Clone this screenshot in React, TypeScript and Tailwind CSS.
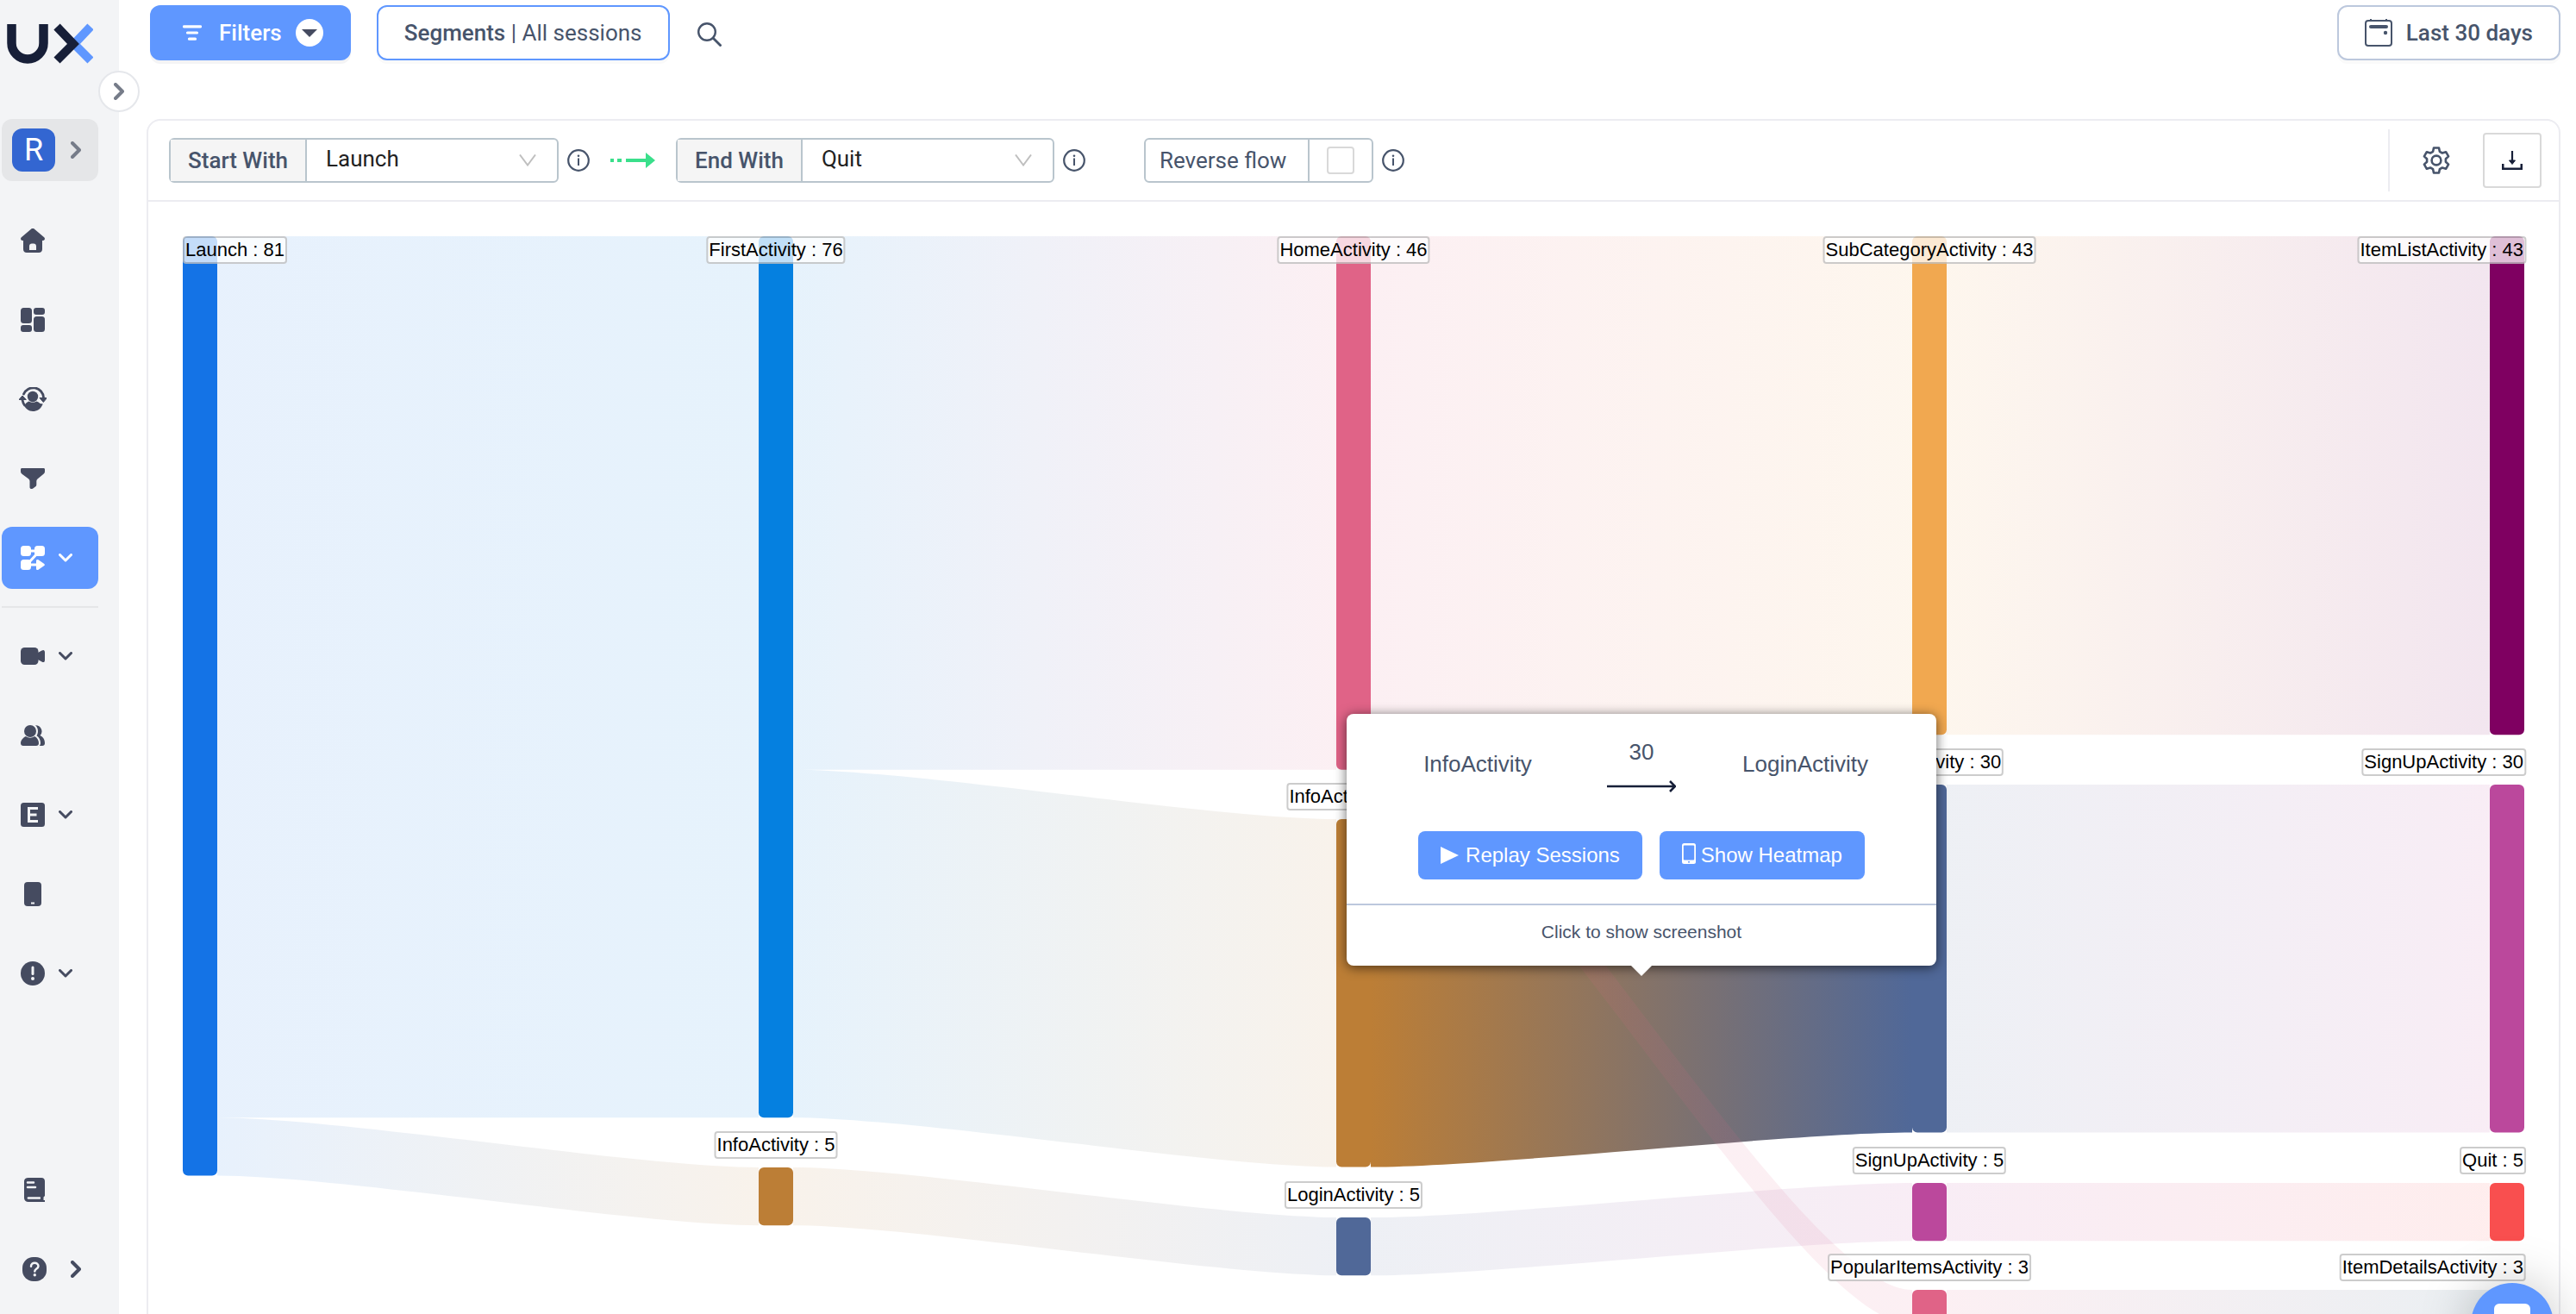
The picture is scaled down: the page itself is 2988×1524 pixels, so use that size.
import React, { useLayoutEffect, useRef, useState } from 'react';

type SankeyNode = {
  id: string;
  name: string;
  value: number;
  column: number;
  y: number;
  color: string;
};

type SankeyLink = {
  source: string;
  target: string;
  value: number;
  sourceOffset?: number;
  active?: boolean;
};

const UNIT = 13.45;
const NODE_WIDTH = 40;
const COLUMNS = 5;
const CURVENESS = 0.22;
const CHART_HEIGHT = 1300;

const nodes: SankeyNode[] = [
  { id: 'launch', name: 'Launch', value: 81, column: 0, y: 0, color: '#1473e6' },
  { id: 'first', name: 'FirstActivity', value: 76, column: 1, y: 0, color: '#0580e0' },
  { id: 'info-1', name: 'InfoActivity', value: 5, column: 1, y: 1080, color: '#bc7e36' },
  { id: 'home', name: 'HomeActivity', value: 46, column: 2, y: 0, color: '#e06387' },
  { id: 'info-2', name: 'InfoActivity', value: 30, column: 2, y: 676, color: '#bc7e36' },
  { id: 'login-2', name: 'LoginActivity', value: 5, column: 2, y: 1138, color: '#506898' },
  { id: 'subcategory', name: 'SubCategoryActivity', value: 43, column: 3, y: 0, color: '#f1a850' },
  { id: 'login-3', name: 'LoginActivity', value: 30, column: 3, y: 636, color: '#506898' },
  { id: 'signup-3', name: 'SignUpActivity', value: 5, column: 3, y: 1098, color: '#bb489c' },
  { id: 'popular', name: 'PopularItemsActivity', value: 3, column: 3, y: 1222, color: '#e06387' },
  { id: 'itemlist', name: 'ItemListActivity', value: 43, column: 4, y: 0, color: '#7f0061' },
  { id: 'signup-4', name: 'SignUpActivity', value: 30, column: 4, y: 636, color: '#bb489c' },
  { id: 'quit', name: 'Quit', value: 5, column: 4, y: 1098, color: '#f94f4f' },
  { id: 'details', name: 'ItemDetailsActivity', value: 3, column: 4, y: 1222, color: '#2f5f7f' },
];

const links: SankeyLink[] = [
  { source: 'launch', target: 'first', value: 76 },
  { source: 'launch', target: 'info-1', value: 5, sourceOffset: 76 },
  { source: 'first', target: 'home', value: 46 },
  { source: 'first', target: 'info-2', value: 30, sourceOffset: 46 },
  { source: 'info-1', target: 'login-2', value: 5 },
  { source: 'home', target: 'subcategory', value: 43 },
  { source: 'info-2', target: 'login-3', value: 30, active: true },
  { source: 'home', target: 'popular', value: 3, sourceOffset: 43 },
  { source: 'login-2', target: 'signup-3', value: 5 },
  { source: 'subcategory', target: 'itemlist', value: 43 },
  { source: 'login-3', target: 'signup-4', value: 30 },
  { source: 'signup-3', target: 'quit', value: 5 },
  { source: 'popular', target: 'details', value: 3 },
];

const nodeById = (id: string) => nodes.find((node) => node.id === id)!;

const Logo = () => (
  <svg width="100" height="48" viewBox="0 0 100 48" fill="none" aria-label="UX">
    <path d="M5.500 1V23a18.500 18.500 0 0 0 37 0V1" stroke="#171f38" strokeWidth="10.500" />
    <path d="M97 4 78 24 97 43" stroke="#5f97ff" strokeWidth="10" />
    <path d="M58 4 77 24 58 43" stroke="#171f38" strokeWidth="10" />
  </svg>
);

const HomeIcon = () => (
  <svg width="28" height="28" viewBox="0 0 28 28" fill="currentColor">
    <path
      fillRule="evenodd"
      d="M12 .7a3 3 0 0 1 4 0l11.200 9.600c1.500 1.400.6 3.500-1.200 3.700l-1 .1V24c0 2.500-1.500 4-4 4H7c-2.500 0-4-1.500-4-4v-9.900l-1-.1C.2 13.800-.7 11.700.8 10.300Zm-2 19.800V25h8v-4.500c0-1.800-1.200-3-3-3h-2c-1.800 0-3 1.200-3 3Z"
    />
  </svg>
);

const DashboardIcon = () => (
  <svg width="28" height="28" viewBox="0 0 28 28" fill="currentColor">
    <rect width="13" height="18" rx="3.500" />
    <rect y="20" width="13" height="8" rx="3" />
    <rect x="15" width="13" height="8" rx="3" />
    <rect x="15" y="10" width="13" height="18" rx="3.500" />
  </svg>
);

const UserCycleIcon = () => (
  <svg width="32" height="28" viewBox="0 0 32 28" fill="currentColor">
    <circle cx="16" cy="11" r="6.200" />
    <path d="M5 19c2 6 6.500 9 11 9 5 0 9-2.500 11-7l.8-1.500-3.300-.5c-1-1-2.500-2-4-2.500-3 1.600-6 1.600-9 0-2 .7-3.500 2-4.300 3.500Z" />
    <path
      d="M5.500 8A12 12 0 0 1 28.500 12M4 15c.4 2 1 4 2.500 6"
      fill="none"
      stroke="currentColor"
      strokeWidth="2.800"
      strokeLinecap="round"
    />
    <path d="M4 10 8.300 14.500H0ZM28.300 17.500 24 12.500h8.500Z" stroke="currentColor" strokeWidth="1" strokeLinejoin="round" />
  </svg>
);

const FunnelIcon = () => (
  <svg width="28" height="24" viewBox="0 0 28 24" fill="currentColor">
    <path d="M1.500 0h25c1 0 1.500.6 1.500 1.500v2.300c0 1.200-.5 2.200-1.500 3l-7 5.700c-.8.700-1.200 1.500-1.200 2.500v4.200c0 .9-.4 1.500-1 2l-3 2.300c-1.700 1.200-3.800.5-3.800-1.500V15c0-1-.4-1.800-1.200-2.500l-7.800-5.700C.5 6 0 5 0 3.800V1.500C0 .6.500 0 1.500 0Z" />
  </svg>
);

const FlowIcon = () => (
  <svg width="28" height="28" viewBox="0 0 28 28" fill="currentColor">
    <rect width="12" height="12" rx="3.500" />
    <rect x="16" width="12" height="12" rx="3.500" />
    <rect y="16" width="12" height="12" rx="3.500" />
    <path d="M18 17.500c0-1.600 1.200-2 2.500-1.200l6.500 4.400c1.200.8 1.200 1.800 0 2.600l-6.500 4.400c-1.300.8-2.500.4-2.500-1.200Z" />
    <path d="M10 6h8M20 8 9 20M10 22h10" stroke="currentColor" strokeWidth="3" />
  </svg>
);

const VideoIcon = () => (
  <svg width="28" height="20" viewBox="0 0 28 20" fill="currentColor">
    <rect width="20.500" height="20" rx="4.500" />
    <path d="m20 6 4.500-2.500C26.500 2.300 28 3 28 5.500v9c0 2.500-1.500 3.200-3.500 2L20 14Z" />
  </svg>
);

const UsersIcon = () => (
  <svg width="28" height="24" viewBox="0 0 28 24" fill="currentColor">
    <circle cx="11" cy="7" r="7" />
    <path d="M6 13c3 2.200 7 2.200 10 0 3 1.400 5 4.500 5 8 0 2-1.200 3-3 3H3c-1.800 0-3-1-3-3 0-3.500 3-6.600 6-8Z" />
    <path d="M17 .2A7 7 0 0 1 22.500 12C26 13.500 28 17 28 21c0 2-1.200 3-3 3h-3.200c.8-1 1.200-2 1.200-3.500 0-3.500-1.800-6.300-4.500-8.200C20.800 8.500 20.500 3 17 .2Z" />
  </svg>
);

const EventIcon = () => (
  <svg width="28" height="28" viewBox="0 0 28 28" fill="currentColor">
    <rect width="28" height="28" rx="3.500" />
    <path d="M20 6.500H9.500v15H20M10 14h8.500" fill="none" stroke="#f3f4f6" strokeWidth="3" />
  </svg>
);

const DeviceIcon = () => (
  <svg width="28" height="28" viewBox="0 0 28 28" fill="currentColor">
    <rect x="4" width="20" height="28" rx="4" />
    <path d="M12 24.500h4" stroke="#f3f4f6" strokeWidth="2" />
  </svg>
);

const AlertIcon = () => (
  <svg width="28" height="28" viewBox="0 0 28 28" fill="currentColor">
    <circle cx="14" cy="14" r="14" />
    <path d="M14 7v7.500" stroke="#f3f4f6" strokeWidth="3" strokeLinecap="round" />
    <circle cx="14" cy="20" r="2" fill="#f3f4f6" />
  </svg>
);

const BookIcon = () => (
  <svg width="24" height="28" viewBox="0 0 24 28" fill="currentColor">
    <path d="M5 0h15c2.500 0 4 1.500 4 4v17l-1.500 1.500V26H24v2H5c-3 0-5-2-5-4.500V4c0-2.500 2-4 5-4Z" />
    <path d="M4 5.500h7M4 11h9" stroke="#f3f4f6" strokeWidth="2.500" strokeLinecap="round" />
    <path d="M5.500 22.200h12.500c.8 0 1 .5 1 1.300s-.2 1.300-1 1.300H5.500c-1 0-2-.5-2-1.300s1-1.300 2-1.300Z" fill="#f3f4f6" />
  </svg>
);

const HelpIcon = () => (
  <svg width="28" height="28" viewBox="0 0 28 28" fill="currentColor">
    <rect width="28" height="28" rx="12.500" />
    <path
      d="M10 10.800c0-5.400 8.500-5.300 8.500-.3 0 3-4.200 3-4.200 6"
      fill="none"
      stroke="#f3f4f6"
      strokeWidth="2.500"
      strokeLinecap="round"
    />
    <circle cx="14.300" cy="20.800" r="1.700" fill="#f3f4f6" />
  </svg>
);

const ChevronDown = () => (
  <svg width="16" height="10" viewBox="0 0 16 10" fill="none">
    <path d="m1.500 1.500 6.500 6.500 6.500-6.500" stroke="currentColor" strokeWidth="3" strokeLinecap="round" strokeLinejoin="round" />
  </svg>
);

const ChevronRight = () => (
  <svg width="12" height="20" viewBox="0 0 12 20" fill="none">
    <path d="m2 2 8 8-8 8" stroke="currentColor" strokeWidth="4" strokeLinecap="round" strokeLinejoin="round" />
  </svg>
);

const InfoIcon = () => (
  <svg width="26" height="26" viewBox="0 0 26 26" fill="none" className="shrink-0 text-[#47546b]">
    <circle cx="13" cy="13" r="11.800" stroke="currentColor" strokeWidth="2.200" />
    <path d="M13 10.500V19" stroke="currentColor" strokeWidth="2" />
    <circle cx="13" cy="7.800" r="1.300" fill="currentColor" />
  </svg>
);

const mainNav = [
  { label: 'Home', icon: <HomeIcon /> },
  { label: 'Dashboards', icon: <DashboardIcon /> },
  { label: 'Retention', icon: <UserCycleIcon /> },
  { label: 'Funnels', icon: <FunnelIcon /> },
  { label: 'User flow', icon: <FlowIcon />, expandable: true, active: true },
];

const dataNav = [
  { label: 'Sessions', icon: <VideoIcon />, expandable: true },
  { label: 'Users', icon: <UsersIcon /> },
  { label: 'Events', icon: <EventIcon />, expandable: true },
  { label: 'Screens', icon: <DeviceIcon /> },
  { label: 'Issues', icon: <AlertIcon />, expandable: true },
];

type NavItemProps = {
  label: string;
  icon: React.ReactNode;
  expandable?: boolean;
  active?: boolean;
};

const NavItem = ({ label, icon, expandable, active }: NavItemProps) => (
  <button
    aria-label={label}
    className={`flex h-[72px] w-[112px] items-center gap-3.5 rounded-xl pl-5 ${
      active ? 'bg-[#5f97ff] text-white' : 'text-[#454b60]'
    }`}
  >
    <span className="flex w-8 justify-center">{icon}</span>
    {expandable && <ChevronDown />}
  </button>
);

const Sidebar = () => (
  <aside className="relative flex h-full w-[138px] shrink-0 flex-col bg-[#f3f4f6] pb-4 pl-0.5 pt-[27px]">
    <a href="#" className="ml-1.5" aria-label="Home page">
      <Logo />
    </a>
    <button
      aria-label="Expand menu"
      className="absolute -right-6 top-[82px] z-10 flex h-12 w-12 items-center justify-center rounded-full border-2 border-[#e5e7eb] bg-white text-[#767c89]"
    >
      <ChevronRight />
    </button>
    <button
      aria-label="Switch app"
      className="mt-[63px] flex h-[72px] w-[112px] items-center gap-[18px] rounded-xl bg-[#e5e6e8] pl-3 text-[#767c89]"
    >
      <span className="flex h-[50px] w-[50px] items-center justify-center rounded-xl bg-[#3366d1] text-[36px] leading-none text-white">
        R
      </span>
      <ChevronRight />
    </button>
    <nav className="mt-[33px] flex flex-col gap-5">
      {mainNav.map((item) => (
        <NavItem key={item.label} {...item} />
      ))}
    </nav>
    <hr className="mt-5 w-[112px] border-t-2 border-[#e5e6e8]" />
    <nav className="mt-5 flex flex-col gap-5">
      {dataNav.map((item) => (
        <NavItem key={item.label} {...item} />
      ))}
    </nav>
    <div className="mt-auto flex flex-col gap-5 text-[#454b60]">
      <button aria-label="Documentation" className="flex h-[72px] w-[112px] items-center pl-[26px]">
        <BookIcon />
      </button>
      <button aria-label="Help" className="flex h-[72px] w-[112px] items-center gap-7 pl-6">
        <HelpIcon />
        <ChevronRight />
      </button>
    </div>
  </aside>
);

const TopBar = () => (
  <header className="flex items-center pl-1 pt-1.5 text-[26px]">
    <button className="flex h-16 items-center rounded-xl bg-[#5f97ff] pl-[38px] pr-8 font-medium text-white shadow-[0_4px_0_#f4f4f5]">
      <svg width="22" height="18" viewBox="0 0 22 18" fill="none" className="mr-5">
        <path d="M1.500 1.800h19M5.500 9h11M7.500 16.200h7" stroke="white" strokeWidth="3.200" strokeLinecap="round" />
      </svg>
      Filters
      <span className="ml-4 flex h-8 w-8 items-center justify-center rounded-full bg-white">
        <svg width="18" height="9" viewBox="0 0 18 9" fill="#454b60">
          <path d="M0 0h18L9 9Z" />
        </svg>
      </span>
    </button>
    <button className="ml-[30px] h-16 rounded-xl border-2 border-[#5f97ff] bg-white px-[30px] text-[#47546b] shadow-[0_4px_0_#fafafa]">
      <span className="font-medium">Segments</span> | All sessions
    </button>
    <button aria-label="Search" className="ml-8 pt-1 text-[#47546b]">
      <svg width="28" height="28" viewBox="0 0 28 28" fill="none">
        <circle cx="11" cy="11" r="9.800" stroke="currentColor" strokeWidth="2.400" />
        <path d="m18 18 9.500 9.500" stroke="currentColor" strokeWidth="2.800" />
      </svg>
    </button>
    <button className="ml-auto flex h-16 items-center gap-4 rounded-xl border-2 border-[#bcc8dd] bg-white px-[30px] font-medium text-[#47546b] shadow-[0_4px_0_#fafafa]">
      <svg width="32" height="32" viewBox="0 0 32 32" fill="none">
        <rect x="1" y="2" width="30" height="29" rx="3" stroke="currentColor" strokeWidth="2" />
        <path d="M7 0v3M25 0v3" stroke="currentColor" strokeWidth="2" />
        <path d="M7 9h18" stroke="currentColor" strokeWidth="4" strokeLinecap="round" />
        <circle cx="24" cy="16" r="2.200" fill="currentColor" />
      </svg>
      Last 30 days
    </button>
  </header>
);

type FlowSelectProps = {
  id: string;
  label: string;
  value: string;
};

const FlowSelect = ({ id, label, value }: FlowSelectProps) => (
  <div className="flex h-[52px] rounded-md border-2 border-[#b9c5cd]">
    <label
      htmlFor={id}
      className="flex items-center border-r-2 border-[#b9c5cd] bg-[#f5f5f5] px-5 font-medium text-[#47546b]"
    >
      {label}
    </label>
    <div className="relative">
      <select
        id={id}
        defaultValue={value}
        className="h-full w-[290px] appearance-none bg-transparent pb-1 pl-[22px] text-[#222]"
      >
        <option>Launch</option>
        <option>Quit</option>
      </select>
      <svg
        width="20"
        height="14"
        viewBox="0 0 20 14"
        fill="none"
        className="pointer-events-none absolute right-6 top-1/2 -translate-y-1/2"
      >
        <path d="m1 .5 9 12 9-12" stroke="#bfbfbf" strokeWidth="2" />
      </svg>
    </div>
  </div>
);

const Toolbar = () => (
  <div className="flex h-[94px] items-center border-b-2 border-[#ececf1] pl-6 pr-5 text-[26px]">
    <FlowSelect id="start-with" label="Start With" value="Launch" />
    <div className="ml-2.5">
      <InfoIcon />
    </div>
    <svg width="52" height="18" viewBox="0 0 52 18" fill="#3adf8b" className="mx-6">
      <path d="M0 7h4v4H0ZM8 7h5v4H8ZM18 7h23v4H18ZM41 0l11 9-11 9Z" />
    </svg>
    <FlowSelect id="end-with" label="End With" value="Quit" />
    <div className="ml-2.5">
      <InfoIcon />
    </div>
    <div className="ml-[68px] flex h-[52px] rounded-md border-2 border-[#b9c5cd]">
      <label htmlFor="reverse-flow" className="flex items-center pl-4 pr-[25px] text-[#47546b]">
        Reverse flow
      </label>
      <div className="flex items-center border-l-2 border-[#b9c5cd] px-5">
        <input
          id="reverse-flow"
          type="checkbox"
          className="h-8 w-8 appearance-none rounded border-2 border-[#d9d9d9] bg-white checked:bg-[#5f97ff]"
        />
      </div>
    </div>
    <div className="ml-2.5">
      <InfoIcon />
    </div>
    <div className="ml-auto flex h-[72px] items-center border-l-2 border-[#ececf1] pl-[38px]">
      <button aria-label="Settings" className="text-[#47546b]">
        <svg width="32" height="32" viewBox="0 0 32 32" fill="none" stroke="currentColor" strokeWidth="2.600">
          <circle cx="16" cy="16" r="5.400" />
          <path
            d="M13 1.500h6l.9 4.300 3 1.700 4.200-1.300 3 5.200-3.200 2.900v3.400l3.200 2.900-3 5.200-4.200-1.300-3 1.700-.9 4.300h-6l-.9-4.300-3-1.700-4.200 1.300-3-5.200 3.200-2.900v-3.400l-3.200-2.900 3-5.200 4.200 1.300 3-1.700Z"
            strokeLinejoin="round"
          />
        </svg>
      </button>
      <button
        aria-label="Download"
        className="ml-[38px] flex h-16 w-[68px] items-center justify-center rounded border-2 border-[#d9d9d9]"
      >
        <svg width="24" height="22" viewBox="0 0 24 22" fill="none" stroke="#171f38">
          <path d="M12 0v13" strokeWidth="2.200" />
          <path d="M1.200 15v5.700h21.600V15" strokeWidth="2.600" />
          <path d="M8.500 11h7L12 15.500Z" fill="#171f38" strokeWidth="1" />
        </svg>
      </button>
    </div>
  </div>
);

const LinkTooltip = () => (
  <div className="w-[684px] rounded-lg bg-white text-[26px] text-[#47546b] shadow-[0_2px_14px_rgba(0,0,0,0.6)]">
    <div className="flex justify-between px-[78px] pt-7">
      <span className="mt-3.5 w-[148px] text-center leading-8">InfoActivity</span>
      <span className="flex w-20 flex-col items-center leading-8">
        30
        <svg width="80" height="16" viewBox="0 0 80 16" fill="none" stroke="#171f38" strokeWidth="2.600" className="mt-4">
          <path d="M0 8h78M73 2l6 6-6 6" />
        </svg>
      </span>
      <span className="mt-3.5 w-[148px] text-center leading-8">LoginActivity</span>
    </div>
    <div className="mt-11 flex justify-center gap-5 text-2xl text-white">
      <button className="flex h-14 items-center gap-2 rounded-lg bg-[#5f97ff] px-[26px]">
        <svg width="21" height="20" viewBox="0 0 21 20" fill="white">
          <path d="M0 0 21 10 0 20Z" />
        </svg>
        Replay Sessions
      </button>
      <button className="flex h-14 items-center gap-1.5 rounded-lg bg-[#5f97ff] px-[26px]">
        <svg width="16" height="24" viewBox="0 0 16 24" className="-mt-1">
          <rect width="16" height="24" rx="2.500" fill="white" />
          <rect x="1.800" y="2.500" width="12.400" height="17" rx="1" fill="#5f97ff" />
          <circle cx="8" cy="21.800" r="1" fill="#5f97ff" />
        </svg>
        Show Heatmap
      </button>
    </div>
    <div className="mt-7 border-t-2 border-[#bcc8dd] pb-6 pt-4 text-center text-[21px] leading-[30px]">
      Click to show screenshot
    </div>
    <svg width="24" height="12" viewBox="0 0 24 12" fill="white" className="absolute left-1/2 top-full -translate-x-1/2">
      <path d="M0 0h24L12 12Z" />
    </svg>
  </div>
);

const labelAlign = (column: number) => {
  if (column === 0) return '';
  if (column === COLUMNS - 1) return '-translate-x-full';
  return '-translate-x-1/2';
};

const SankeyChart = () => {
  const ref = useRef<HTMLDivElement>(null);
  const [width, setWidth] = useState(0);

  useLayoutEffect(() => {
    const element = ref.current;
    if (!element) return;

    const update = () => setWidth(element.clientWidth);
    update();

    const observer = new ResizeObserver(update);
    observer.observe(element);
    return () => observer.disconnect();
  }, []);

  // Keep columns on even pixels so the node edges stay sharp
  const step = (width - NODE_WIDTH) / (COLUMNS - 1);
  const columnX = (column: number) => Math.floor((column * step) / 2) * 2;

  const linkPath = (link: SankeyLink) => {
    const source = nodeById(link.source);
    const target = nodeById(link.target);
    const x1 = columnX(source.column) + NODE_WIDTH;
    const x2 = columnX(target.column);
    const y1 = source.y + (link.sourceOffset ?? 0) * UNIT;
    const y2 = target.y;
    const h = link.value * UNIT;
    const c1 = x1 + (x2 - x1) * CURVENESS;
    const c2 = x2 - (x2 - x1) * CURVENESS;
    return `M${x1} ${y1}C${c1} ${y1} ${c2} ${y2} ${x2} ${y2}V${y2 + h}C${c2} ${y2 + h} ${c1} ${y1 + h} ${x1} ${y1 + h}Z`;
  };

  const labelX = (column: number) => {
    if (column === 0) return 0;
    if (column === COLUMNS - 1) return width + 2;
    return columnX(column) + NODE_WIDTH / 2;
  };

  return (
    <div ref={ref} className="relative">
      {width > 0 && (
        <>
          <svg width={width} height={CHART_HEIGHT} className="block">
            <defs>
              {links.map((link) => (
                <linearGradient
                  key={link.source + link.target}
                  id={`${link.source}-${link.target}`}
                  gradientUnits="userSpaceOnUse"
                  x1={columnX(nodeById(link.source).column) + NODE_WIDTH}
                  x2={columnX(nodeById(link.target).column)}
                  y1="0"
                  y2="0"
                >
                  <stop offset="0" stopColor={nodeById(link.source).color} />
                  <stop offset="1" stopColor={nodeById(link.target).color} />
                </linearGradient>
              ))}
            </defs>
            {links.map((link) => (
              <path
                key={link.source + link.target}
                d={linkPath(link)}
                fill={`url(#${link.source}-${link.target})`}
                opacity={link.active ? 1 : 0.1}
              />
            ))}
            {nodes.map((node) => (
              <rect
                key={node.id}
                x={columnX(node.column)}
                y={node.y}
                width={NODE_WIDTH}
                height={node.value * UNIT}
                rx="6"
                fill={node.color}
              />
            ))}
          </svg>
          {/* Labels sit above their node, the first row stays inside the chart */}
          {nodes.map((node) => (
            <span
              key={node.id}
              className={`absolute whitespace-nowrap rounded border-2 border-black/20 bg-white/75 px-px text-[22px] leading-7 text-black ${labelAlign(node.column)}`}
              style={{ left: labelX(node.column), top: Math.max(0, node.y - 42) }}
            >
              {node.name} : {node.value}
            </span>
          ))}
          <div
            className="absolute top-[554px] -translate-x-1/2"
            style={{ left: (columnX(2) + columnX(3) + NODE_WIDTH) / 2 }}
          >
            <LinkTooltip />
          </div>
        </>
      )}
    </div>
  );
};

const App: React.FC = () => {
  return (
    <div className="flex h-screen overflow-hidden bg-white font-[Roboto,sans-serif]">
      <Sidebar />
      <main className="min-w-0 flex-1 pl-8 pr-[18px]">
        <TopBar />
        <section className="mt-[68px] rounded-2xl border-2 border-[#ececf1]">
          <Toolbar />
          <div className="px-10 pt-10 font-['Liberation_Sans',Arial,sans-serif]">
            <SankeyChart />
          </div>
        </section>
      </main>

      {/* Chat launcher */}
      <button
        aria-label="Open chat"
        className="fixed -bottom-[60px] right-[26px] flex h-24 w-24 justify-center rounded-full bg-[#5f97ff] pt-6 shadow-[0_2px_60px_rgba(0,0,0,0.25)]"
      >
        <svg width="42" height="48" viewBox="0 0 42 48" fill="white">
          <path d="M6 0h30a6 6 0 0 1 6 6v38l-8-6H6a6 6 0 0 1-6-6V6a6 6 0 0 1 6-6Z" />
        </svg>
      </button>
    </div>
  );
};

export default App;
